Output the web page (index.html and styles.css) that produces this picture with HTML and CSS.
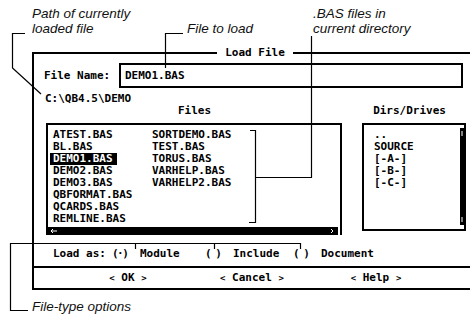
FILE: index.html
```html
<!DOCTYPE html>
<html>
<head>
<meta charset="utf-8">
<link rel="stylesheet" href="styles.css">
</head>
<body>
<div class="page">
  <div class="dialog">
    <div class="title-row"><span class="title">Load File</span></div>
    <div class="name-row">
      <span class="label">File Name:</span>
      <div class="textbox">DEMO1.BAS</div>
    </div>
    <div class="path">C:\QB4.5\DEMO</div>
    <div class="heads"><span class="h-files">Files</span><span class="h-dirs">Dirs/Drives</span></div>
    <div class="lists">
      <div class="files">
        <div class="file-grid">
          <div class="col">
            <span class="item">ATEST.BAS</span>
            <span class="item">BL.BAS</span>
            <span class="item selected">DEMO1.BAS</span>
            <span class="item">DEMO2.BAS</span>
            <span class="item">DEMO3.BAS</span>
            <span class="item">QBFORMAT.BAS</span>
            <span class="item">QCARDS.BAS</span>
            <span class="item">REMLINE.BAS</span>
          </div>
          <div class="col">
            <span class="item">SORTDEMO.BAS</span>
            <span class="item">TEST.BAS</span>
            <span class="item">TORUS.BAS</span>
            <span class="item">VARHELP.BAS</span>
            <span class="item">VARHELP2.BAS</span>
          </div>
        </div>
        <div class="hscroll">
          <svg class="arrow-l" width="8" height="6" viewBox="0 0 8 6"><path d="M7 3H1M3 1L1 3L3 5" stroke="#fff" stroke-width="1" fill="none"/></svg>
          <svg class="arrow-r" width="4" height="6" viewBox="0 0 4 6"><path d="M1 1L3 3L1 5" stroke="#fff" stroke-width="1" fill="none"/></svg>
        </div>
      </div>
      <div class="dirs">
        <div class="dir-items">
          <span class="item">..</span>
          <span class="item">SOURCE</span>
          <span class="item">[-A-]</span>
          <span class="item">[-B-]</span>
          <span class="item">[-C-]</span>
        </div>
        <div class="vscroll">
          <svg width="4" height="6" viewBox="0 0 4 6"><path d="M2 1V6" stroke="#fff" stroke-width="1"/></svg>
          <svg width="4" height="6" viewBox="0 0 4 6"><path d="M2 0V5" stroke="#fff" stroke-width="1"/></svg>
        </div>
      </div>
    </div>
    <div class="options">
      <span class="opt-label">Load as:</span>
      <span class="opt opt-1"><span class="radio">(·)</span>Module</span>
      <span class="opt opt-2"><span class="radio">( )</span>Include</span>
      <span class="opt"><span class="radio">( )</span>Document</span>
    </div>
    <div class="sep"></div>
    <div class="buttons">
      <span class="btn"><span class="chev">&lt;</span> OK <span class="chev">&gt;</span></span>
      <span class="btn"><span class="chev">&lt;</span> Cancel <span class="chev">&gt;</span></span>
      <span class="btn"><span class="chev">&lt;</span> Help <span class="chev">&gt;</span></span>
    </div>
  </div>

  <div class="note note-path">Path of currently<br>loaded file</div>
  <div class="note note-load">File to load</div>
  <div class="note note-bas">.BAS files in<br>current directory</div>
  <div class="note note-type">File-type options</div>

  <svg class="callouts" width="470" height="323" viewBox="0 0 470 323">
    <g stroke="#000" stroke-width="1.2" fill="none">
      <polyline points="25,33.5 12.5,33.5 12.5,68 41,94"/>
      <polyline points="183,33.5 165.5,33.5 165.5,68"/>
      <polyline points="311.5,36 311.5,177.5 256,177.5"/>
      <polyline points="250,130.5 255.5,130.5 255.5,222.5 249,222.5"/>
      <polyline points="28,310.5 10.5,310.5 10.5,243.5 300.5,243.5 300.5,249"/>
      <line x1="135.5" y1="243.5" x2="135.5" y2="249"/>
      <line x1="214.5" y1="243.5" x2="214.5" y2="249"/>
    </g>
  </svg>
</div>
</body>
</html>
```

FILE: styles.css
```css
html, body {
  margin: 0;
  padding: 0;
  background: #fff;
}

.page {
  position: relative;
  width: 470px;
  height: 323px;
  overflow: hidden;
  padding-top: 52px;
  box-sizing: border-box;
}

.dialog {
  margin-left: 32px;
  width: 446px;
  box-sizing: border-box;
  border: 2px solid #000;
  font-family: "DejaVu Sans Mono", "Liberation Mono", monospace;
  font-weight: bold;
  font-size: 11px;
  line-height: 12px;
  color: #000;
}

.title-row {
  display: flex;
  justify-content: center;
  margin-top: -8px;
  height: 14px;
  line-height: 14px;
}

.title {
  background: #fff;
  padding: 0 8px;
}

.name-row {
  display: flex;
  align-items: center;
  margin-top: 3px;
  padding-left: 10px;
  padding-right: 13px;
}

.label {
  width: 75px;
  flex: none;
}

.textbox {
  flex: 1;
  height: 25px;
  box-sizing: border-box;
  border: 2px solid #000;
  padding-left: 4px;
  line-height: 21px;
}

.path {
  margin-top: 5px;
  padding-left: 11px;
}

.heads {
  display: flex;
}

.h-files {
  margin-left: 144px;
}

.h-dirs {
  margin-left: 162px;
}

.lists {
  display: flex;
  margin-top: 6px;
  padding-left: 12px;
  gap: 20px;
}

.files {
  width: 296px;
  height: 112px;
  box-sizing: border-box;
  border: 2px solid #000;
  border-bottom: none;
  display: flex;
  flex-direction: column;
}

.file-grid {
  display: grid;
  grid-template-columns: 99px 1fr;
  padding: 4px 0 0 2px;
  height: 96px;
}

.col {
  display: flex;
  flex-direction: column;
  align-items: flex-start;
}

.item {
  display: block;
  padding: 0 4px 0 3px;
  height: 12px;
}

.selected {
  background: #000;
  color: #fff;
}

.hscroll {
  margin: 2px 2px 0 0;
  height: 8px;
  background: #000;
  display: flex;
  align-items: center;
  justify-content: space-between;
  padding: 0 4px 0 2px;
}

.hscroll svg {
  display: block;
}

.dirs {
  width: 104px;
  height: 108px;
  box-sizing: border-box;
  border: 2px solid #000;
  display: flex;
}

.dir-items {
  flex: 1;
  padding: 4px 0 0 7px;
}

.vscroll {
  flex: none;
  width: 4px;
  margin: 3px 0 4px;
  background: #000;
  display: flex;
  flex-direction: column;
  justify-content: space-between;
  padding: 2px 0;
}

.vscroll svg {
  display: block;
}

.options {
  display: flex;
  margin-top: 13px;
  padding-left: 19px;
}

.opt-label {
  width: 59px;
}

.opt {
  display: flex;
}

.opt-1 {
  width: 93px;
}

.opt-2 {
  width: 88px;
}

.radio {
  width: 28px;
  letter-spacing: -1.5px;
}

.sep {
  margin-top: 6px;
  height: 2px;
  background: #000;
}

.buttons {
  display: grid;
  grid-template-columns: repeat(3, 124px);
  justify-items: center;
  margin-top: 4px;
  padding-left: 32px;
  padding-bottom: 4px;
}

.chev {
  font-size: 9px;
}

.note {
  position: absolute;
  font-family: "Liberation Sans", Arial, sans-serif;
  font-style: italic;
  font-size: 13.5px;
  line-height: 15px;
  color: #111;
}

.note-path {
  left: 32px;
  top: 6px;
}

.note-load {
  left: 187px;
  top: 21px;
}

.note-bas {
  left: 313px;
  top: 6px;
}

.note-type {
  left: 32px;
  top: 299px;
}

.callouts {
  position: absolute;
  left: 0;
  top: 0;
  pointer-events: none;
}
```
